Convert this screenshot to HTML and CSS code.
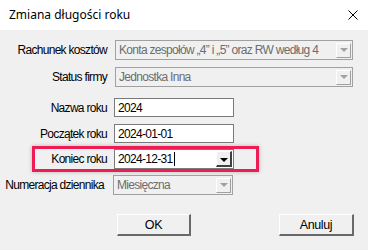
FILE: index.html
```html
<!DOCTYPE html>
<html lang="pl">
<head>
  <meta charset="UTF-8" />
  <title>Zmiana długości roku</title>
  <link rel="stylesheet" href="styles.css">
</head>
<body>
  <div class="titlebar">
    <span class="title">Zmiana długości roku</span>
    <svg class="close" width="10" height="10" viewBox="0 0 10 10">
      <path d="M0.5 0.5 L9.5 9.5 M9.5 0.5 L0.5 9.5" stroke="#000" stroke-width="1" />
    </svg>
  </div>

  <div class="form">
    <div class="row r1">
      <label>Rachunek kosztów</label>
      <div class="combo disabled wide">
        <span class="value">Konta zespołów „4” i „5” oraz RW według 4</span>
        <span class="drop"><i class="arrow"></i></span>
      </div>
    </div>
    <div class="row r2">
      <label>Status firmy</label>
      <div class="combo disabled wide">
        <span class="value">Jednostka Inna</span>
        <span class="drop"><i class="arrow"></i></span>
      </div>
    </div>
    <div class="row r3">
      <label>Nazwa roku</label>
      <div class="field">2024</div>
    </div>
    <div class="row r4">
      <label>Początek roku</label>
      <div class="field">2024-01-01</div>
    </div>
    <div class="row r5">
      <div class="highlight"></div>
      <label>Koniec roku</label>
      <div class="combo active">
        <span class="value">2024-12-31<span class="caret"></span></span>
        <span class="drop"><i class="arrow"></i></span>
      </div>
    </div>
    <div class="row r6">
      <label>Numeracja dziennika</label>
      <div class="combo disabled">
        <span class="value">Miesięczna</span>
        <span class="drop"><i class="arrow"></i></span>
      </div>
    </div>

    <div class="buttons">
      <button>OK</button>
      <button>Anuluj</button>
    </div>
  </div>
</body>
</html>
```

FILE: styles.css
```css
body {
  margin: 0;
  width: 368px;
  height: 250px;
  background: #f0f0f0;
  font-family: 'Liberation Sans', Arial, sans-serif;
  font-size: 12px;
  letter-spacing: -0.7px;
  color: #000;
  overflow: hidden;
}
.titlebar {
  height: 30px;
  background: #fff;
  display: flex;
  align-items: center;
  justify-content: space-between;
  padding: 0 10px 0 9px;
  letter-spacing: 0;
}
.title {
  font-family: 'Noto Sans', sans-serif;
  font-size: 12px;
  margin-top: -1px;
}
.close {
  display: block;
}
.form {
  padding-top: 10px;
}
.row {
  position: relative;
  display: flex;
  align-items: center;
  height: 20px;
}
.r2 { margin-top: 7px; }
.r3 { margin-top: 11px; height: 19px; }
.r4 { margin-top: 7px; height: 19px; }
.r5 { margin-top: 6px; }
.r6 { margin-top: 6px; }
label {
  width: 107px;
  flex: none;
  text-align: right;
  white-space: nowrap;
  margin-right: 7px;
}
.r6 label {
  width: 104px;
  margin-right: 9px;
}
.field,
.combo {
  box-sizing: border-box;
  height: 100%;
  width: 120px;
  border: 1px solid #7a7a7a;
  background: #fff;
  display: flex;
  align-items: center;
  padding-left: 3px;
  white-space: nowrap;
  overflow: hidden;
}
.combo.wide {
  width: 238px;
  margin-left: 1px;
}
.combo.disabled {
  background: #f0f0f0;
  color: #6d6d6d;
  border-color: #a0a0a0;
}
.combo .value {
  flex: 1;
  overflow: hidden;
}
.caret {
  display: inline-block;
  width: 1px;
  height: 14px;
  background: #000;
  vertical-align: -3px;
  margin-left: 2px;
}
.drop {
  flex: none;
  width: 15px;
  height: 15px;
  margin-right: 1px;
  box-sizing: border-box;
  background: #f0f0f0;
  border: 1px solid;
  border-color: #fff #a0a0a0 #a0a0a0 #fff;
  display: flex;
  align-items: center;
  justify-content: center;
}
.active .drop {
  width: 16px;
  height: 16px;
  border-width: 1px 2px 2px 1px;
  border-color: #fff #404040 #404040 #fff;
}
.arrow {
  width: 0;
  height: 0;
  border-left: 4px solid transparent;
  border-right: 4px solid transparent;
  border-top: 4px solid #a0a0a0;
}
.active .arrow {
  border-top-color: #000;
  margin-top: 2px;
}
.highlight {
  position: absolute;
  left: 32px;
  top: -3px;
  width: 227px;
  height: 26px;
  box-sizing: border-box;
  border: 3px solid #ef1b54;
  box-shadow: 0 0 4px rgba(0, 0, 0, 0.25);
}
.buttons {
  display: flex;
  justify-content: space-between;
  padding: 0 14px 0 117px;
  margin-top: 19px;
}
button {
  width: 74px;
  height: 22px;
  font-family: inherit;
  font-size: 12.5px;
  letter-spacing: -0.4px;
  background: #f0f0f0;
  border: 1px solid;
  border-width: 1px 2px 2px 1px;
  border-color: #fff #696969 #696969 #fff;
  padding: 0;
  color: #000;
}
button + button {
  width: 75px;
}
```
